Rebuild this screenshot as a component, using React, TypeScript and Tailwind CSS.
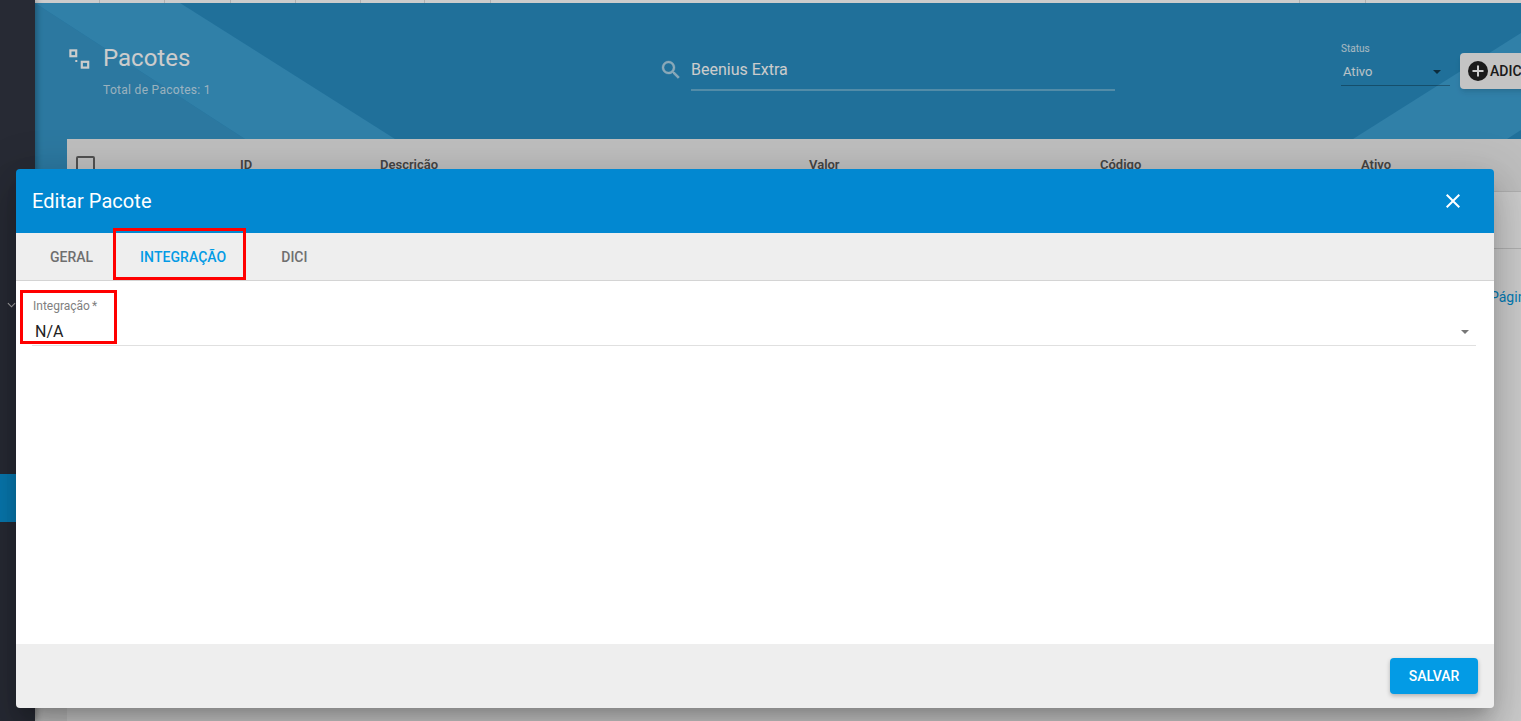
import React from 'react';

const columns = [
    { label: 'ID', width: 'w-[140px]' },
    { label: 'Descrição', width: 'w-[429px]' },
    { label: 'Valor', width: 'w-[291px]' },
    { label: 'Código', width: 'w-[261px]' },
    { label: 'Ativo', width: 'w-[100px]' },
];

const topDividers = ['w-[65px]', 'w-[65px]', 'w-[66px]', 'w-[65px]', 'w-[65px]', 'w-[64px]', 'w-[66px]', 'w-[809px]', 'w-[66px]'];

const SelectArrow = ({ className }: { className: string }) => (
    <svg viewBox="0 0 8 4" className={className}>
        <path d="M0 0h8L4 4z" fill="currentColor" />
    </svg>
);

const Sidebar = () => (
    <aside className="w-[35px] shrink-0 h-full bg-[#313542] flex flex-col relative z-10 shadow-[2px_0_6px_rgba(0,0,0,0.3)]">
        <div className="h-[302px]" />
        <svg viewBox="0 0 10 6" className="w-[9px] h-[6px] ml-[7px] text-[#d0d0d0]">
            <path d="M1 1l4 4 4-4" fill="none" stroke="currentColor" strokeWidth="1.2" />
        </svg>
        <div className="h-[166px]" />
        <div className="h-[48px] bg-[#0a98dc]" />
    </aside>
);

const PageHeader = () => (
    <header className="relative h-[180px] bg-[#288dc1] overflow-hidden shrink-0">
        <svg className="absolute inset-0 w-full h-full" viewBox="0 0 1486 180" preserveAspectRatio="none">
            <polygon points="0,0 210,136 280,180 0,180" fill="#3797c9" />
            <polygon points="0,0 145,0 360,136 210,136" fill="#3da0d3" />
            <polygon points="1318,136 1486,30 1486,127 1472,136" fill="#3da0d3" />
        </svg>
        <div className="relative flex items-start pl-[32px] h-full">
            <div className="w-[592px] shrink-0 flex">
                <svg viewBox="0 0 21 20" className="w-[21px] h-[20px] shrink-0 mt-[46px] ml-[2px] text-white" fill="none" stroke="currentColor" strokeWidth="2.2">
                    <rect x="1.4" y="1.4" width="5.8" height="5.8" />
                    <rect x="12.8" y="12.8" width="6.4" height="5.8" />
                    <rect x="6.3" y="11" width="2" height="2" fill="currentColor" stroke="none" />
                </svg>
                <div className="ml-[13px] mt-[40px]">
                    <h1 className="text-[24px] leading-[30px] text-white">Pacotes</h1>
                    <p className="text-[12px] tracking-[0.3px] leading-[14px] mt-[10px] text-white/70">Total de Pacotes: 1</p>
                </div>
            </div>
            <svg viewBox="0 0 24 24" className="w-[24px] h-[24px] shrink-0 mt-[55px] text-white/60" fill="currentColor" stroke="currentColor" strokeWidth="0.4">
                <path d="M15.5 14h-.79l-.28-.27A6.47 6.47 0 0 0 16 9.5 6.5 6.5 0 1 0 9.5 16c1.61 0 3.09-.59 4.23-1.57l.27.28v.79l5 4.99L20.49 19l-4.99-5zm-6 0C7.01 14 5 11.99 5 9.5S7.01 5 9.5 5 14 7.01 14 9.5 11.99 14 9.5 14z" />
            </svg>
            <div className="w-[424px] shrink-0 ml-[8px] mt-[55px] h-[33px] border-b-2 border-white/30 text-[16px] leading-[24px] text-white">
                Beenius Extra
            </div>
            <div className="w-[109px] shrink-0 ml-[226px] mt-[40px] h-[43px] border-b border-black/30 relative">
                <div className="text-[10px] leading-[12px] text-white/80">Status</div>
                <div className="flex items-center justify-between pl-[2px] pr-[9px] mt-[9px] text-white/90 text-[13px] leading-[16px]">
                    Ativo
                    <SelectArrow className="w-[8px] h-[4px] text-black/60" />
                </div>
            </div>
            <button className="ml-[10px] mt-[50px] h-[36px] w-[120px] shrink-0 bg-[#f5f5f5] rounded-[4px] flex items-center pl-[8px] gap-[2px] text-[14px] font-medium text-[#222] shadow-md">
                <svg viewBox="0 0 20 20" className="w-[20px] h-[20px] shrink-0">
                    <circle cx="10" cy="10" r="10" fill="#222" />
                    <path d="M10 4.5v11M4.5 10h11" stroke="#fff" strokeWidth="2" />
                </svg>
                ADICIONAR
            </button>
        </div>
    </header>
);

const PackagesTable = () => (
    <section className="relative -mt-[44px] ml-[32px] flex-1 bg-white">
        <div className="h-[53px] bg-[#eeeeee] border-b border-[#ddd] flex items-center pl-[9px]">
            <div className="w-[19px] h-[19px] border-2 border-[#666] rounded-[2px] shrink-0 mr-[145px]" />
            {columns.map((column) => (
                <div key={column.label} className={`${column.width} shrink-0 text-[13px] font-semibold text-[#555]`}>
                    {column.label}
                </div>
            ))}
        </div>
        <div className="h-[57px] border-b border-[#ddd]" />
        <div className="h-[58px] flex items-end justify-start pl-[1423px] text-[14px] leading-[20px] text-[#039be5] whitespace-nowrap">
            Página
        </div>
    </section>
);

const EditDialog = () => (
    <div className="absolute inset-0 z-20 bg-black/20 pt-[169px] pl-[16px]">
        <div className="relative w-[1478px] h-[539px] flex flex-col rounded-[4px] overflow-hidden shadow-[0_11px_15px_-7px_rgba(0,0,0,0.2),0_24px_38px_3px_rgba(0,0,0,0.14),0_9px_46px_8px_rgba(0,0,0,0.12)]">
            <div className="h-[64px] shrink-0 bg-[#0288d1] flex items-center justify-between pl-[16px] pr-[29px]">
                <h2 className="text-[20px] tracking-[0.05px] text-white">Editar Pacote</h2>
                <svg viewBox="0 0 24 24" className="w-[24px] h-[24px] text-white" fill="currentColor">
                    <path d="M19 6.41 17.59 5 12 10.59 6.41 5 5 6.41 10.59 12 5 17.59 6.41 19 12 13.41 17.59 19 19 17.59 13.41 12z" />
                </svg>
            </div>
            <div className="h-[48px] shrink-0 bg-[#eeeeee] border-b border-[#d4d4d4] flex items-center pt-[1px] pl-[34px] text-[14px] font-medium text-[#6f6f6f]">
                <span>GERAL</span>
                <span className="ml-[47px] tracking-[0.05px] text-[#039be5]">INTEGRAÇÃO</span>
                <span className="ml-[55px]">DICI</span>
            </div>
            <div className="flex-1 bg-white pl-[16px] pr-[18px] pt-[18px]">
                <div className="h-[47px] border-b border-[#e0e0e0] relative">
                    <div className="pl-[1px] text-[12px] leading-[14px] text-[#808080]">
                        Integração<span className="ml-[2px]">*</span>
                    </div>
                    <div className="flex items-center justify-between pl-[3px] pr-[7px] mt-[9px] text-[16px] leading-[20px] text-[#222]">
                        N/A
                        <SelectArrow className="w-[8px] h-[4px] text-[#777]" />
                    </div>
                </div>
            </div>
            <div className="h-[64px] shrink-0 bg-[#eeeeee] flex items-center justify-end pr-[16px]">
                <button className="w-[88px] h-[36px] rounded-[4px] bg-[#039be5] text-white text-[14px] font-medium shadow-[0_2px_4px_rgba(0,0,0,0.25)]">
                    SALVAR
                </button>
            </div>
            {/* red marks drawn over the screen */}
            <div className="absolute left-[97px] top-[59px] w-[133px] h-[52px] border-[3px] border-[#ff0000]" />
            <div className="absolute left-[4px] top-[121px] w-[97px] h-[54px] border-[3px] border-[#ff0000]" />
        </div>
    </div>
);

export default function App() {
    return (
        <div className="relative w-[1521px] h-[721px] overflow-hidden flex bg-[#f0f0f0] font-['Roboto',sans-serif]">
            <Sidebar />
            <main className="flex-1 min-w-0 flex flex-col">
                <div className="h-[3px] shrink-0 bg-white flex shadow-sm">
                    {topDividers.map((width, i) => (
                        <div key={i} className={`${width} shrink-0 border-r border-[#ddd]`} />
                    ))}
                </div>
                <PageHeader />
                <PackagesTable />
            </main>
            <EditDialog />
        </div>
    );
}
